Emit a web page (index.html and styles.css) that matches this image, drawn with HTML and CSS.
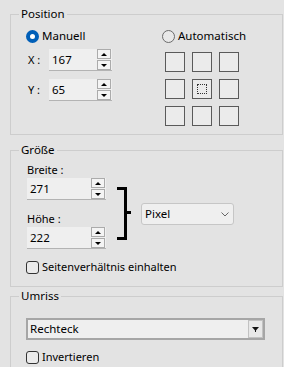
FILE: index.html
```html
<!DOCTYPE html>
<html lang="de">
<head>
    <meta charset="UTF-8">
    <meta name="viewport" content="width=device-width, initial-scale=1.0">
    <title>Position und Größe</title>
    <link rel="stylesheet" href="styles.css">
</head>
<body>
    <fieldset class="group group-position">
        <legend>Position</legend>
        <div class="position-cols">
            <div class="col-manual">
                <label class="option"><input type="radio" name="mode" checked><span>Manuell</span></label>
                <div class="coord-row">
                    <span class="coord-label">X :</span>
                    <div class="spin spin-coord">
                        <span class="spin-value">167</span>
                        <div class="spin-btns"><span class="spin-up"></span><span class="spin-down"></span></div>
                    </div>
                </div>
                <div class="coord-row coord-row-y">
                    <span class="coord-label">Y :</span>
                    <div class="spin spin-coord">
                        <span class="spin-value">65</span>
                        <div class="spin-btns"><span class="spin-up"></span><span class="spin-down"></span></div>
                    </div>
                </div>
            </div>
            <div class="col-auto">
                <label class="option"><input type="radio" name="mode"><span>Automatisch</span></label>
                <div class="anchor-grid">
                    <span class="anchor"></span>
                    <span class="anchor"></span>
                    <span class="anchor"></span>
                    <span class="anchor"></span>
                    <span class="anchor anchor-focus"><i></i></span>
                    <span class="anchor"></span>
                    <span class="anchor"></span>
                    <span class="anchor"></span>
                    <span class="anchor"></span>
                </div>
            </div>
        </div>
    </fieldset>

    <fieldset class="group group-size">
        <legend>Größe</legend>
        <div class="size-row">
            <div class="size-fields">
                <div class="field-label">Breite :</div>
                <div class="spin spin-size">
                    <span class="spin-value">271</span>
                    <div class="spin-btns"><span class="spin-up"></span><span class="spin-down"></span></div>
                </div>
                <div class="field-label field-label-second">Höhe :</div>
                <div class="spin spin-size">
                    <span class="spin-value">222</span>
                    <div class="spin-btns"><span class="spin-up"></span><span class="spin-down"></span></div>
                </div>
            </div>
            <svg class="bracket" width="14" height="53" viewBox="0 0 14 53">
                <rect x="0" y="0" width="10" height="3" fill="#000"/>
                <rect x="7" y="0" width="3" height="53" fill="#000"/>
                <rect x="0" y="50" width="10" height="3" fill="#000"/>
                <rect x="10" y="24" width="4" height="3" fill="#000"/>
            </svg>
            <div class="dropdown dropdown-unit">
                <span>Pixel</span>
                <svg width="8" height="5" viewBox="0 0 8 5"><path d="M0.5 0.5 L4 4 L7.5 0.5" fill="none" stroke="#666" stroke-width="1"/></svg>
            </div>
        </div>
        <label class="option option-check"><input type="checkbox"><span>Seitenverhältnis einhalten</span></label>
    </fieldset>

    <fieldset class="group group-shape">
        <legend>Umriss</legend>
        <div class="combo">
            <span>Rechteck</span>
            <span class="combo-btn">
                <svg width="7" height="5" viewBox="0 0 7 5"><path d="M0 0 H7 L3.5 4 Z" fill="#111"/><rect x="3" y="3" width="1" height="2" fill="#111"/></svg>
            </span>
        </div>
        <label class="option option-check"><input type="checkbox"><span>Invertieren</span></label>
    </fieldset>
</body>
</html>
```

FILE: styles.css
```css
html, body {
    margin: 0;
    overflow: hidden;
}
body {
    background: #e3e3e3;
    font-family: "Noto Sans", "Liberation Sans", sans-serif;
    font-size: 11px;
    line-height: 16px;
    color: #000;
}
.group {
    margin: 0 1px 0 10px;
    padding: 0 0 0 15px;
    border: 1px solid #cdcdcd;
    min-width: 0;
}
.group legend {
    margin-left: -7px;
    padding: 0 2px;
    line-height: 16px;
    font-size: 11.5px;
}
.group-position {
    margin-top: 6px;
    padding-top: 6px;
    padding-bottom: 8px;
}
.group-size {
    margin-top: 7px;
    padding-top: 4px;
    padding-bottom: 11px;
}
.group-shape {
    margin-top: 1px;
    padding-top: 14px;
    padding-bottom: 10px;
}

/* options */
.option {
    display: flex;
    align-items: center;
    height: 16px;
    font-size: 11.5px;
}
.option input {
    appearance: none;
    -webkit-appearance: none;
    width: 13px;
    height: 13px;
    margin: 0 3px 0 0;
    box-sizing: border-box;
    flex: none;
}
.option input[type="radio"] {
    border-radius: 50%;
    border: 1px solid #6b6b6b;
    background: #e8e8e8;
}
.option input[type="radio"]:checked {
    border: 4px solid #005fb8;
    background: #fff;
}
.option input[type="checkbox"] {
    border: 1px solid #333;
    border-radius: 3px;
    background: #ebebeb;
}
.option-check {
    margin-top: 10px;
    font-size: 11px;
}
.group-shape .option-check {
    margin-top: 9px;
}

/* position */
.position-cols {
    display: flex;
}
.col-manual {
    width: 136px;
}
.coord-row {
    display: flex;
    align-items: center;
    margin-top: 5px;
}
.coord-row-y {
    margin-top: 8px;
}
.coord-label {
    width: 21px;
    padding-left: 2px;
}
.anchor-grid {
    display: grid;
    grid-template-columns: repeat(3, 20px);
    grid-auto-rows: 20px;
    gap: 7px;
    margin: 8px 0 0 3px;
}
.anchor {
    display: flex;
    align-items: center;
    justify-content: center;
    box-sizing: border-box;
    border: 1px solid #5a5a5a;
    background: #ebebeb;
}
.anchor-focus i {
    width: 10px;
    height: 10px;
    box-sizing: border-box;
    border: 1px dotted #333;
}

/* spin boxes */
.spin {
    display: flex;
    align-items: flex-start;
    height: 22px;
    box-sizing: border-box;
    background: #efefef;
    border-bottom: 1px solid #b3b3b3;
}
.spin-coord {
    width: 63px;
}
.spin-size {
    width: 79px;
}
.spin-value {
    flex: 1;
    padding-left: 3px;
    line-height: 21px;
    font-size: 11.5px;
}
.spin-btns {
    display: flex;
    flex-direction: column;
    gap: 1px;
    width: 14px;
    margin-right: 1px;
}
.spin-btns span {
    display: flex;
    align-items: center;
    justify-content: center;
    height: 10px;
    box-sizing: border-box;
    border: 1px solid #ababab;
    background: #f4f4f4;
}
.spin-up::before, .spin-down::before {
    content: "";
    border-left: 3px solid transparent;
    border-right: 3px solid transparent;
}
.spin-up::before {
    border-bottom: 3px solid #000;
}
.spin-down::before {
    border-top: 3px solid #000;
}

/* size */
.size-row {
    display: flex;
    align-items: flex-start;
}
.size-fields {
    margin-left: 1px;
}
.field-label-second {
    margin-top: 11px;
}
.bracket {
    margin: 25px 0 0 11px;
}
.dropdown {
    display: flex;
    align-items: center;
    justify-content: space-between;
    box-sizing: border-box;
    background: #efefef;
    border: 1px solid #c6c6c6;
    border-radius: 3px;
}
.dropdown-unit {
    width: 93px;
    height: 22px;
    margin: 41px 0 0 10px;
    padding: 0 4px 0 3px;
    font-size: 11.5px;
}

/* shape */
.combo {
    display: flex;
    align-items: center;
    justify-content: space-between;
    width: 239px;
    height: 22px;
    box-sizing: border-box;
    border: 2px solid #a6a6a6;
    background: #efefef;
    padding-left: 2px;
    font-size: 11.5px;
}
.combo-btn {
    display: flex;
    align-items: center;
    justify-content: center;
    width: 15px;
    height: 18px;
    box-sizing: border-box;
    border: 1px solid #c2c2c2;
    background: #e8e8e8;
}
```
